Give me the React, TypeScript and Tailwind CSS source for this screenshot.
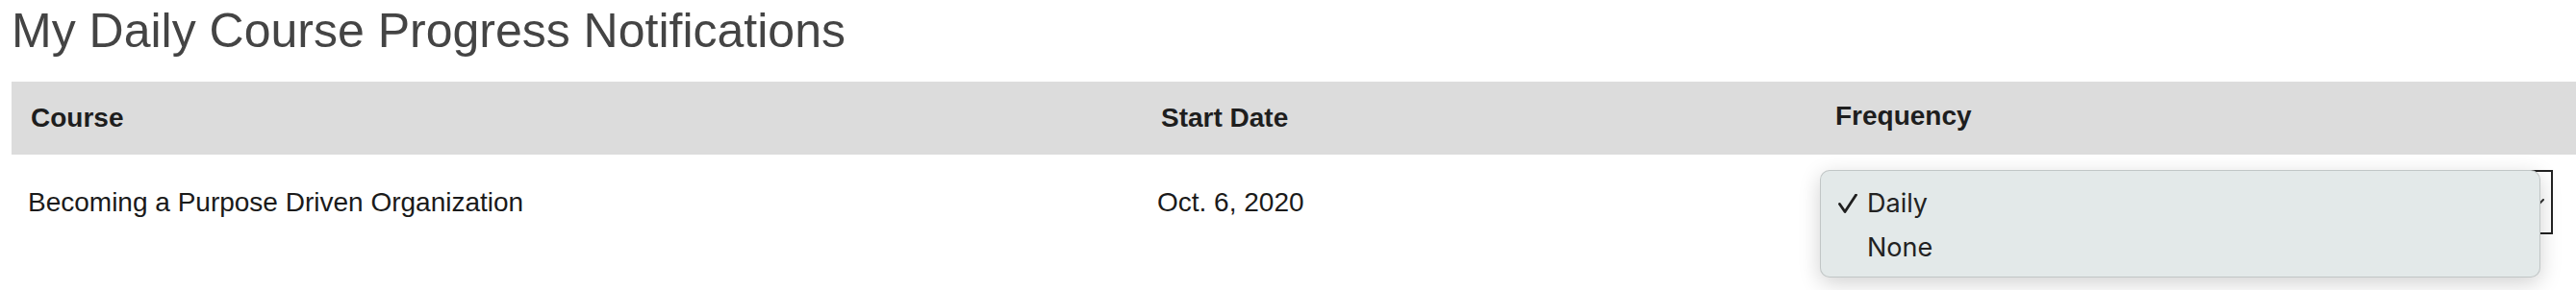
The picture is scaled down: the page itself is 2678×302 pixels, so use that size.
import React from "react";

const columns = [
  { key: "course", label: "Course", width: "w-[1175px]" },
  { key: "start", label: "Start Date", width: "w-[701px]" },
];

function CheckMark() {
  return (
    <svg width="20" height="20" viewBox="0 0 20 20" fill="none" className="text-[#1f1f1f]">
      <path d="M1.5 10.5 L7 18.5 L18.5 1" stroke="currentColor" strokeWidth="2.8" strokeLinecap="round" strokeLinejoin="round" />
    </svg>
  );
}

function FrequencySelect() {
  const options = ["Daily", "None"];
  const selected = "Daily";

  return (
    <div className="relative w-[746px] h-[67px] border-2 border-[#222] bg-white">
      {/* chevron, mostly covered by the open menu */}
      <svg width="18" height="10" viewBox="0 0 18 10" fill="none" className="absolute right-[5px] top-[28px]">
        <path d="M1 1 L8 8 L15 1" stroke="#333" strokeWidth="2" strokeLinecap="round" />
      </svg>

      {/* open native menu */}
      <div className="absolute left-[-18px] top-[-2px] w-[749px] h-[112px] rounded-[10px] bg-[#e3e9e9] border border-black/15 shadow-[0_6px_22px_rgba(0,0,0,0.18)] pt-[11px] font-['Inter',sans-serif] text-[27px] text-[#222]">
        {options.map((opt) => (
          <div key={opt} className="flex items-center h-[46px] pl-[18px]">
            <div className="w-[30px] flex items-center">{opt === selected && <CheckMark />}</div>
            <span className="leading-[46px]">{opt}</span>
          </div>
        ))}
      </div>
    </div>
  );
}

export default function App() {
  return (
    <div className="min-h-[302px] bg-white pl-3 font-['Liberation_Sans',Arial,sans-serif] overflow-hidden">
      <h1 className="pt-[2px] text-[50px] leading-[60px] text-[#444] font-normal">
        My Daily Course Progress Notifications
      </h1>

      <div className="mt-[23px]">
        {/* Header row */}
        <div className="flex h-[76px] bg-[#dcdcdc] text-[28px] leading-[32px] font-bold text-[#1e1e1e]">
          {columns.map((col) => (
            <div key={col.key} className={`${col.width} flex items-center pl-[20px]`}>
              {col.label}
            </div>
          ))}
          <div className="flex-1 flex items-center pl-[20px] pb-[4px]">Frequency</div>
        </div>

        {/* Body row */}
        <div className="flex items-center py-[16px] text-[28px] leading-[32px] text-[#1a1a1a]">
          <div className="w-[1175px] pl-[17px]">Becoming a Purpose Driven Organization</div>
          <div className="w-[701px] pl-[16px]">Oct. 6, 2020</div>
          <div className="flex-1 pl-[20px]">
            <FrequencySelect />
          </div>
        </div>
      </div>
    </div>
  );
}
